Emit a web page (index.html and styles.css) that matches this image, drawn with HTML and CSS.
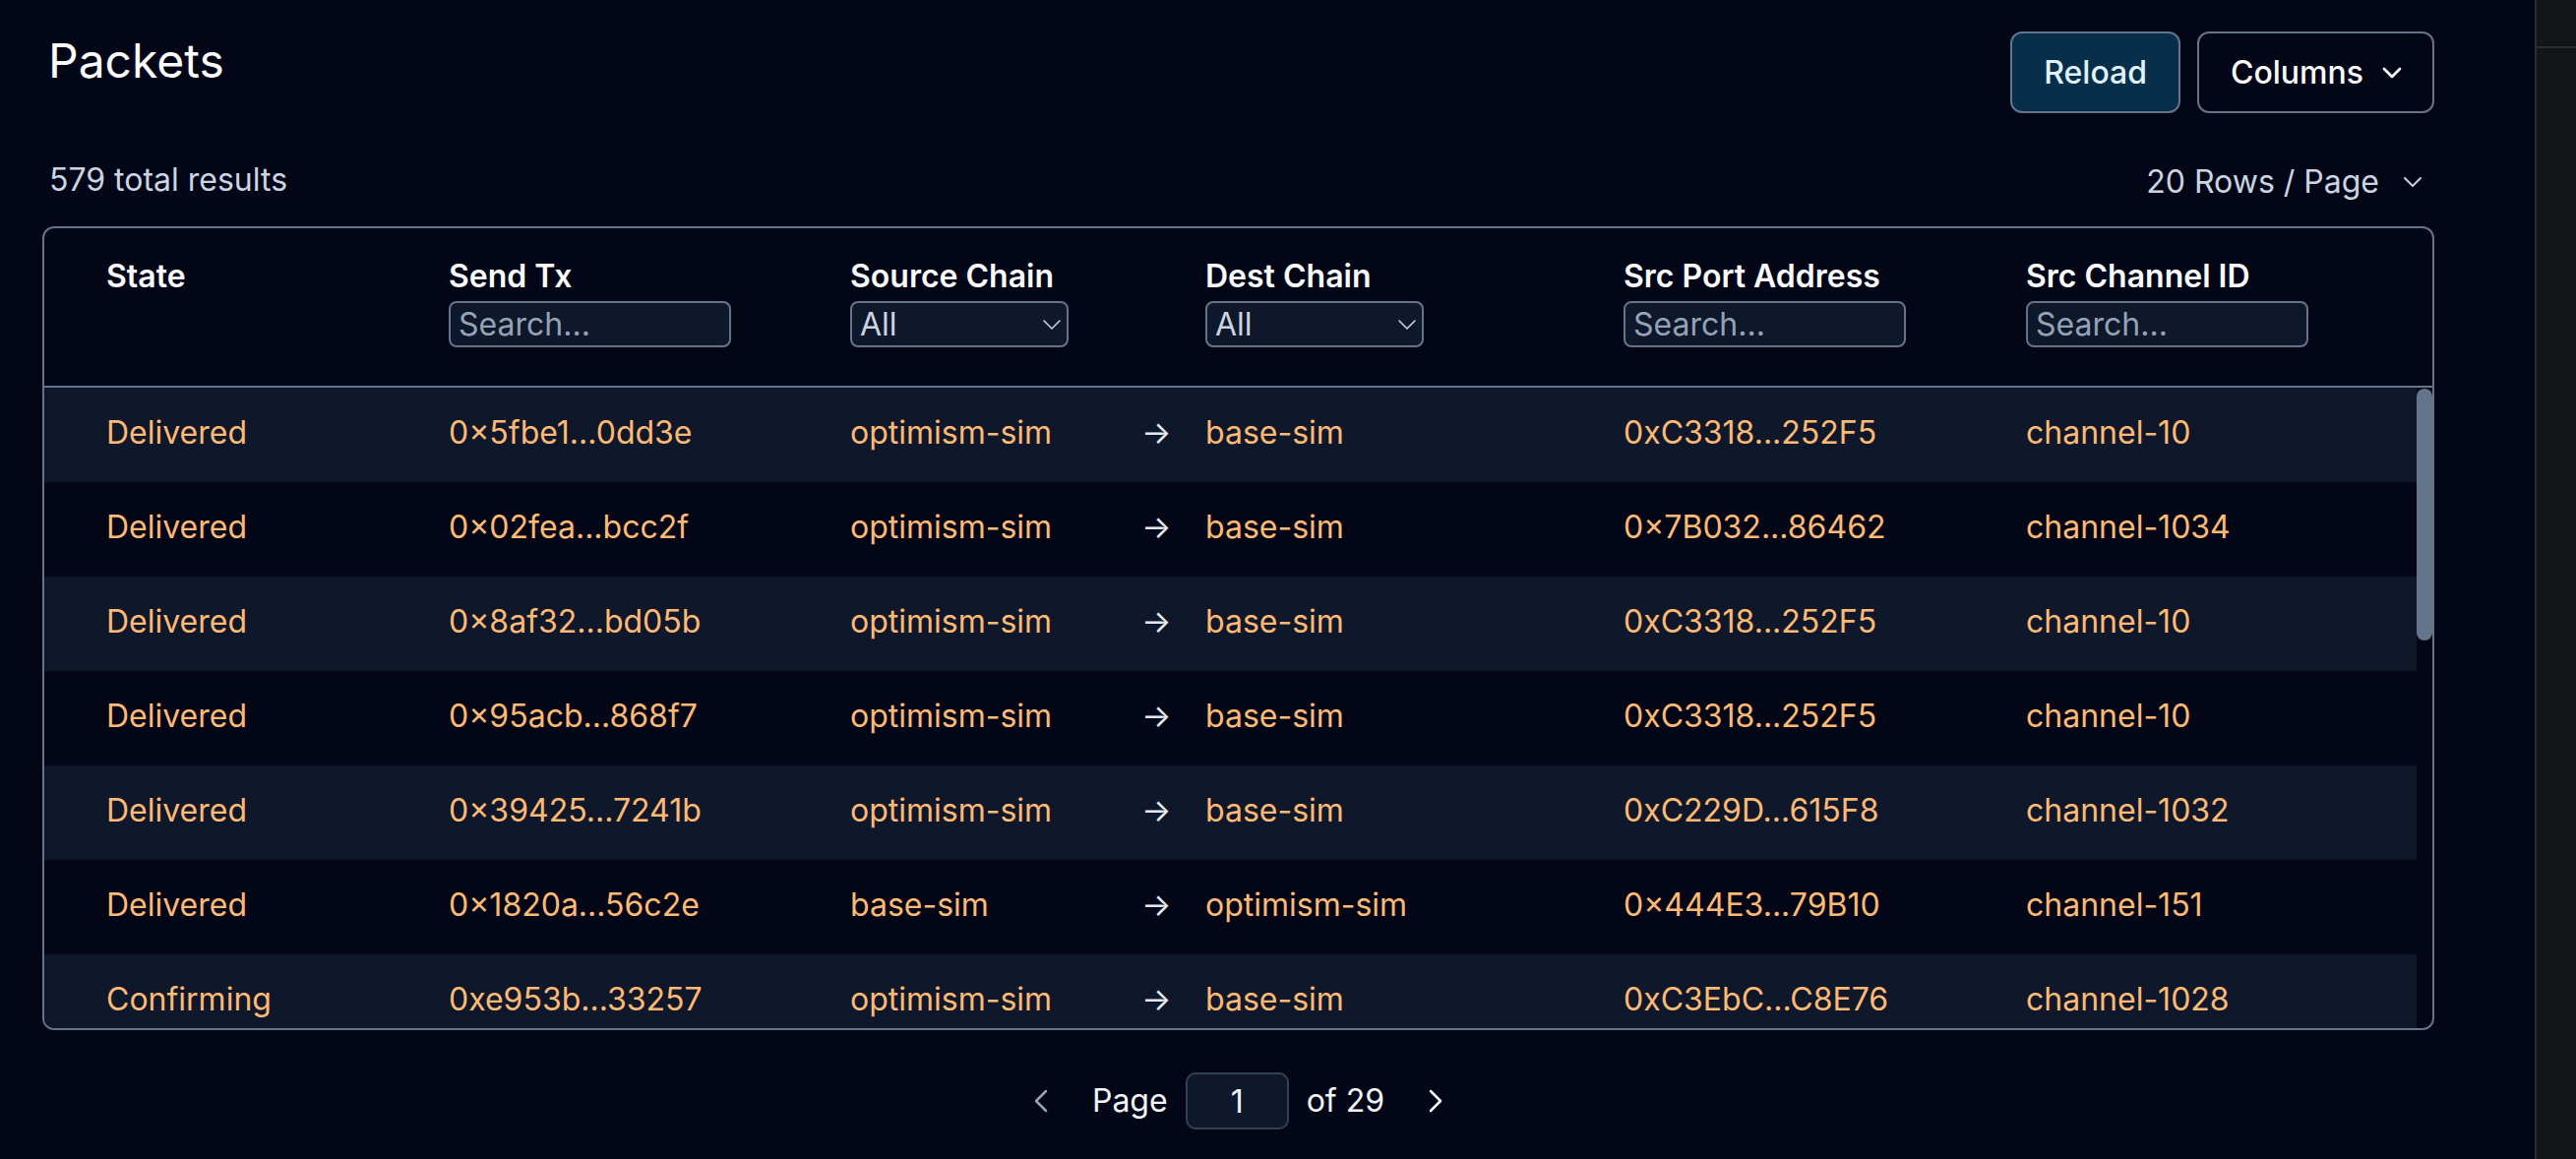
FILE: index.html
```html
<!DOCTYPE html>
<html lang="en">
<head>
  <meta charset="UTF-8">
  <title>Packets</title>
  <meta name="viewport" content="width=device-width, initial-scale=1.0">
  <link rel="stylesheet" href="styles.css">
</head>
<body>

  <div class="main">

    <!-- Title + actions -->
    <div class="toolbar">
      <h1 class="title">Packets</h1>
      <div class="actions">
        <button class="btn btn-reload">Reload</button>
        <button class="btn btn-columns">
          Columns
          <svg class="chev" width="32" height="32" viewBox="0 0 24 24" fill="none" stroke="currentColor" stroke-width="2" stroke-linecap="round" stroke-linejoin="round"><path d="m6 9 6 6 6-6"/></svg>
        </button>
      </div>
    </div>

    <div class="meta">
      <span class="total">579 total results</span>
      <div class="page-size">
        20 Rows / Page
        <svg class="chev-sm" width="32" height="32" viewBox="0 0 24 24" fill="none" stroke="currentColor" stroke-width="1.4" stroke-linecap="round" stroke-linejoin="round"><path d="m6 9 6 6 6-6"/></svg>
      </div>
    </div>

    <!-- Table -->
    <div class="table">
      <div class="thead">
        <div class="th">State</div>
        <div class="th">
          Send Tx
          <input class="filter" type="text" placeholder="Search...">
        </div>
        <div class="th">
          Source Chain
          <div class="select-wrap">
            <select class="filter-select"><option>All</option></select>
            <svg class="select-chev" width="18" height="10" viewBox="0 0 18 10" fill="none" stroke="currentColor" stroke-width="1.6" stroke-linecap="round" stroke-linejoin="round"><polyline points="1,1 9,9 17,1"/></svg>
          </div>
        </div>
        <div class="th"></div>
        <div class="th">
          Dest Chain
          <div class="select-wrap">
            <select class="filter-select"><option>All</option></select>
            <svg class="select-chev" width="18" height="10" viewBox="0 0 18 10" fill="none" stroke="currentColor" stroke-width="1.6" stroke-linecap="round" stroke-linejoin="round"><polyline points="1,1 9,9 17,1"/></svg>
          </div>
        </div>
        <div class="th">
          Src Port Address
          <input class="filter" type="text" placeholder="Search...">
        </div>
        <div class="th">
          Src Channel ID
          <input class="filter" type="text" placeholder="Search...">
        </div>
      </div>

      <div class="tbody-wrap">
        <div class="tbody">
          <div class="tr"><span>Delivered</span><span>0×5fbe1...0dd3e</span><span>optimism-sim</span><span class="arrow">→</span><span>base-sim</span><span>0xC3318...252F5</span><span>channel-10</span></div>
          <div class="tr"><span>Delivered</span><span>0×02fea...bcc2f</span><span>optimism-sim</span><span class="arrow">→</span><span>base-sim</span><span>0×7B032...86462</span><span>channel-1034</span></div>
          <div class="tr"><span>Delivered</span><span>0×8af32...bd05b</span><span>optimism-sim</span><span class="arrow">→</span><span>base-sim</span><span>0xC3318...252F5</span><span>channel-10</span></div>
          <div class="tr"><span>Delivered</span><span>0×95acb...868f7</span><span>optimism-sim</span><span class="arrow">→</span><span>base-sim</span><span>0xC3318...252F5</span><span>channel-10</span></div>
          <div class="tr"><span>Delivered</span><span>0×39425...7241b</span><span>optimism-sim</span><span class="arrow">→</span><span>base-sim</span><span>0xC229D...615F8</span><span>channel-1032</span></div>
          <div class="tr"><span>Delivered</span><span>0×1820a...56c2e</span><span>base-sim</span><span class="arrow">→</span><span>optimism-sim</span><span>0×444E3...79B10</span><span>channel-151</span></div>
          <div class="tr"><span>Confirming</span><span>0xe953b...33257</span><span>optimism-sim</span><span class="arrow">→</span><span>base-sim</span><span>0xC3EbC...C8E76</span><span>channel-1028</span></div>
          <div class="tr"><span>Delivered</span><span>0×4d7e2...a91c3</span><span>base-sim</span><span class="arrow">→</span><span>optimism-sim</span><span>0×444E3...79B10</span><span>channel-151</span></div>
          <div class="tr"><span>Delivered</span><span>0xb2c90...1fe84</span><span>optimism-sim</span><span class="arrow">→</span><span>base-sim</span><span>0xC3318...252F5</span><span>channel-10</span></div>
          <div class="tr"><span>Delivered</span><span>0×7a113...e02d9</span><span>optimism-sim</span><span class="arrow">→</span><span>base-sim</span><span>0xC229D...615F8</span><span>channel-1032</span></div>
          <div class="tr"><span>Delivered</span><span>0×6c4f8...3b7a0</span><span>optimism-sim</span><span class="arrow">→</span><span>base-sim</span><span>0×7B032...86462</span><span>channel-1034</span></div>
          <div class="tr"><span>Delivered</span><span>0×29d05...f4e61</span><span>base-sim</span><span class="arrow">→</span><span>optimism-sim</span><span>0×444E3...79B10</span><span>channel-151</span></div>
          <div class="tr"><span>Delivered</span><span>0xa08e3...c5d12</span><span>optimism-sim</span><span class="arrow">→</span><span>base-sim</span><span>0xC3318...252F5</span><span>channel-10</span></div>
          <div class="tr"><span>Delivered</span><span>0×3f7b1...09a8e</span><span>optimism-sim</span><span class="arrow">→</span><span>base-sim</span><span>0xC3EbC...C8E76</span><span>channel-1028</span></div>
          <div class="tr"><span>Delivered</span><span>0×81c6d...7e2f3</span><span>optimism-sim</span><span class="arrow">→</span><span>base-sim</span><span>0xC3318...252F5</span><span>channel-10</span></div>
          <div class="tr"><span>Delivered</span><span>0xd5e20...4a19b</span><span>base-sim</span><span class="arrow">→</span><span>optimism-sim</span><span>0×444E3...79B10</span><span>channel-151</span></div>
          <div class="tr"><span>Delivered</span><span>0×5a9c4...b8d07</span><span>optimism-sim</span><span class="arrow">→</span><span>base-sim</span><span>0xC229D...615F8</span><span>channel-1032</span></div>
          <div class="tr"><span>Delivered</span><span>0×0e3f7...62c5a</span><span>optimism-sim</span><span class="arrow">→</span><span>base-sim</span><span>0xC3318...252F5</span><span>channel-10</span></div>
          <div class="tr"><span>Delivered</span><span>0×94b1a...d03e6</span><span>optimism-sim</span><span class="arrow">→</span><span>base-sim</span><span>0×7B032...86462</span><span>channel-1034</span></div>
          <div class="tr"><span>Delivered</span><span>0×2c8d9...1f5b4</span><span>optimism-sim</span><span class="arrow">→</span><span>base-sim</span><span>0xC3318...252F5</span><span>channel-10</span></div>
        </div>
        <div class="scrollbar">
          <div class="thumb"></div>
        </div>
      </div>
    </div>

    <!-- Pagination -->
    <div class="pager">
      <svg class="pg-prev" width="40" height="40" viewBox="0 0 24 24" fill="none" stroke="currentColor" stroke-width="1.5" stroke-linecap="round" stroke-linejoin="round"><path d="m15 18-6-6 6-6"/></svg>
      <span>Page</span>
      <input class="page-input" type="text" value="1">
      <span>of 29</span>
      <svg class="pg-next" width="40" height="40" viewBox="0 0 24 24" fill="none" stroke="currentColor" stroke-width="1.5" stroke-linecap="round" stroke-linejoin="round"><path d="m9 18 6-6-6-6"/></svg>
    </div>

  </div>

  <!-- side strip -->
  <div class="side">
    <div class="side-top"></div>
  </div>

</body>
</html>
```

FILE: styles.css
```css
html, body {
  height: 100%;
}

body {
  margin: 0;
  display: flex;
  overflow: hidden;
  background-color: #020617;
  color: #e2e8f0;
  font-family: Inter, "Noto Sans", sans-serif;
  font-size: 32px;
  line-height: 48px;
}

.main {
  flex: 1;
  padding: 32px 102px 0 43px;
  display: flex;
  flex-direction: column;
}

.toolbar {
  display: flex;
  justify-content: space-between;
  align-items: flex-start;
}

.title {
  margin: 0;
  padding-left: 6px;
  font-size: 48px;
  line-height: 60px;
  font-weight: 400;
  color: #f8fafc;
}

.actions {
  display: flex;
  gap: 17px;
}

.btn {
  height: 83px;
  border: 2px solid #64748b;
  border-radius: 12px;
  font-family: inherit;
  font-size: 32px;
  font-weight: 500;
  display: flex;
  align-items: center;
  cursor: pointer;
}

.btn-reload {
  background-color: #082f49;
  color: #e0f2fe;
  padding: 0 32px;
}

.btn-columns {
  background-color: #020617;
  color: #f8fafc;
  padding: 0 25px 0 32px;
}

.btn-columns .chev {
  margin-left: 13px;
}

.meta {
  margin-top: 42px;
  display: flex;
  justify-content: space-between;
  align-items: center;
  color: #cbd5e1;
}

.total {
  padding-left: 7px;
}

.page-size {
  display: flex;
  align-items: center;
  padding-top: 4px;
  padding-right: 6px;
}

.page-size .chev-sm {
  margin-left: 18px;
}

/* table */
.table {
  margin-top: 21px;
  height: 817px;
  box-sizing: border-box;
  border: 2px solid #64748b;
  border-radius: 12px;
  overflow: hidden;
  display: flex;
  flex-direction: column;
}

.thead,
.tr {
  display: grid;
  grid-template-columns: 348px 408px 296px 65px 425px 409px 1fr;
  padding-left: 63px;
}

.thead {
  padding-top: 25px;
  padding-bottom: 38px;
  border-bottom: 2px solid #64748b;
  font-weight: 600;
  color: #f8fafc;
}

.th {
  display: flex;
  flex-direction: column;
  align-items: flex-start;
  gap: 1px;
  min-height: 96px;
}

.filter {
  width: 287px;
  height: 47px;
  box-sizing: border-box;
  background-color: #0f172a;
  border: 2px solid #64748b;
  border-radius: 8px;
  padding: 0 8px;
  font-family: inherit;
  font-size: 32px;
  color: #e2e8f0;
}

.filter::placeholder {
  color: #94a3b8;
}

.select-wrap {
  position: relative;
}

.filter-select {
  -webkit-appearance: none;
  appearance: none;
  width: 222px;
  height: 47px;
  box-sizing: border-box;
  background-color: #0f172a;
  border: 2px solid #64748b;
  border-radius: 8px;
  padding: 0 8px;
  font-family: inherit;
  font-size: 32px;
  font-weight: 400;
  color: #cbd5e1;
}

.select-chev {
  position: absolute;
  right: 8px;
  top: 19px;
  color: #cbd5e1;
  pointer-events: none;
}

.tbody-wrap {
  flex: 1;
  min-height: 0;
  display: flex;
}

.tbody {
  flex: 1;
  overflow: hidden;
}

.scrollbar {
  width: 16px;
  padding-top: 1px;
}

.thumb {
  height: 256px;
  border-radius: 8px;
  background-color: #64748b;
}

.tr {
  height: 96px;
  box-sizing: border-box;
  padding-top: 22px;
  color: #fdba74;
  white-space: nowrap;
}

.tr:nth-child(odd) {
  background-color: #0f172a;
}

.tr .arrow {
  color: #e2e8f0;
}

/* pagination */
.pager {
  margin-top: 43px;
  display: flex;
  justify-content: center;
  align-items: center;
  gap: 18px;
  color: #f1f5f9;
}

.pg-prev {
  color: #94a3b8;
  margin-right: 14px;
}

.pg-next {
  color: #f8fafc;
  margin-left: 14px;
}

.page-input {
  width: 105px;
  height: 58px;
  box-sizing: border-box;
  background-color: #0f172a;
  border: 2px solid #334155;
  border-radius: 10px;
  text-align: center;
  font-family: inherit;
  font-size: 32px;
  color: #f1f5f9;
}

/* side strip */
.side {
  width: 40px;
  flex-shrink: 0;
  border-left: 2px solid #2b2e38;
  background-color: #141518;
}

.side-top {
  height: 47px;
  border-bottom: 2px solid #2a2b33;
}
```
